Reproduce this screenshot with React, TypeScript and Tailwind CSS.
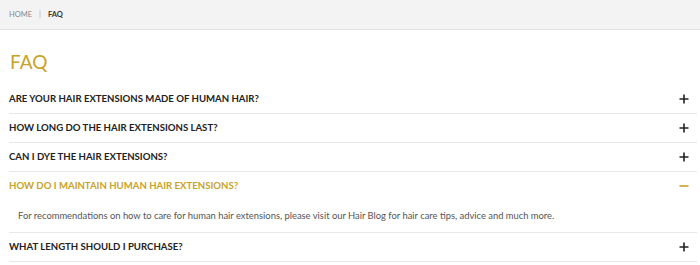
const faqs = [
  { q: 'ARE YOUR HAIR EXTENSIONS MADE OF HUMAN HAIR?' },
  { q: 'HOW LONG DO THE HAIR EXTENSIONS LAST?' },
  { q: 'CAN I DYE THE HAIR EXTENSIONS?' },
  {
    q: 'HOW DO I MAINTAIN HUMAN HAIR EXTENSIONS?',
    a: 'For recommendations on how to care for human hair extensions, please visit our Hair Blog for hair care tips, advice and much more.',
    open: true,
  },
  { q: 'WHAT LENGTH SHOULD I PURCHASE?' },
];

function Plus() {
  return (
    <svg width="10" height="10" viewBox="0 0 10 10" className="shrink-0">
      <path d="M5 0.5v9M0.5 5h9" stroke="#222" strokeWidth="1.6" />
    </svg>
  );
}

function Minus() {
  return (
    <svg width="10" height="10" viewBox="0 0 10 10" className="shrink-0">
      <path d="M0.5 5h9" stroke="#c9a227" strokeWidth="1.6" />
    </svg>
  );
}

export default function App() {
  return (
    <div className="w-[700px] h-[265px] overflow-hidden bg-white font-['Lato',sans-serif]">
      {/* breadcrumb bar */}
      <div className="h-[30px] flex items-center gap-x-[7px] px-[9px] bg-[#f3f3f3] border-b border-[#e2e2e2] text-[7.5px]">
        <span className="text-[#888]">HOME</span>
        <span className="text-[#aaa]">|</span>
        <span className="text-[#333] font-bold">FAQ</span>
      </div>

      <div className="ml-[9px] mr-[3px]">
        <h1 className="h-[55px] flex items-center pt-[10px] pl-px text-[19px] text-[#c9a227]">FAQ</h1>

        {faqs.map((f) => (
          <div key={f.q} className="border-b border-[#e8e8e8]">
            <div className="h-[28px] flex items-center justify-between pr-[8px]">
              <span
                className={`text-[9.6px] font-bold ${f.open ? 'text-[#c9a227]' : 'text-[#222]'}`}
              >
                {f.q}
              </span>
              {f.open ? <Minus /> : <Plus />}
            </div>
            {f.a && (
              <p className="h-[32px] flex items-center pl-[9px] text-[9.4px] text-[#555]">{f.a}</p>
            )}
          </div>
        ))}
      </div>
    </div>
  );
}
